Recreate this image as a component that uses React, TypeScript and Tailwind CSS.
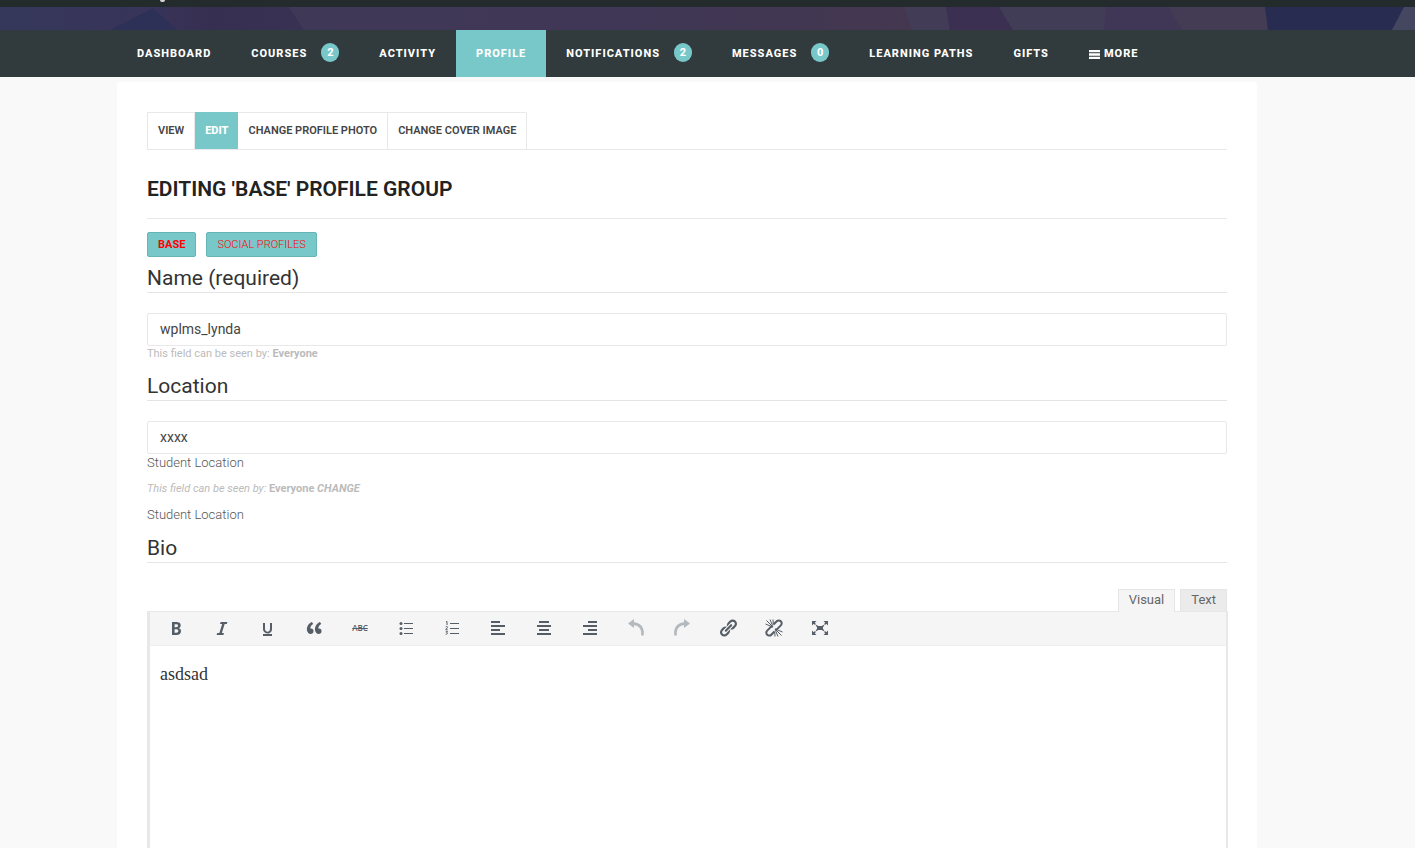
import React, { useState } from "react";

type NavItem = { label: string; count?: number; active?: boolean; menu?: boolean };

const navItems: NavItem[] = [
  { label: "Dashboard" },
  { label: "Courses", count: 2 },
  { label: "Activity" },
  { label: "Profile", active: true },
  { label: "Notifications", count: 2 },
  { label: "Messages", count: 0 },
  { label: "Learning Paths" },
  { label: "Gifts" },
  { label: "More", menu: true },
];

const profileTabs = [
  { label: "View" },
  { label: "Edit", active: true },
  { label: "Change Profile Photo" },
  { label: "Change Cover Image" },
];

function CoverStrip() {
  return (
    <svg className="block h-[23px] w-full" viewBox="0 0 1415 23" preserveAspectRatio="none" aria-hidden="true">
      <defs>
        <linearGradient id="cover" x1="0" x2="1" y1="0" y2="0">
          <stop offset="0" stopColor="#35385a" />
          <stop offset="0.1" stopColor="#38345a" />
          <stop offset="0.15" stopColor="#372f52" />
          <stop offset="0.2" stopColor="#393153" />
          <stop offset="1" stopColor="#3f3753" />
        </linearGradient>
        <linearGradient id="wine" x1="0" x2="1" y1="0" y2="0">
          <stop offset="0" stopColor="#3f3856" />
          <stop offset="0.55" stopColor="#3f3755" />
          <stop offset="1" stopColor="#443750" />
        </linearGradient>
      </defs>
      <rect width="1415" height="23" fill="url(#cover)" />
      <path d="M153 1L177 23H110z" fill="#2d3157" />
      <path d="M289 0H905L916 23H304z" fill="url(#wine)" />
      <path d="M904 0H946L950 23H912z" fill="#433c57" />
      <path d="M946 0H999L1013 23H950z" fill="#3b3052" />
      <path d="M999 0H1107L1104 23H1013z" fill="#423d57" />
      <path d="M1107 0H1168L1182 23H1104z" fill="#403656" />
      <path d="M1168 0H1265L1268 23H1182z" fill="#443c55" />
      <path d="M1265 0H1404L1392 23H1268z" fill="#292c51" />
      <path d="M1404 0H1415V23H1392z" fill="#454660" />
    </svg>
  );
}

function Icon({ children }: { children: React.ReactNode }) {
  return (
    <svg className="size-5" viewBox="0 0 20 20" fill="currentColor" aria-hidden="true">
      {children}
    </svg>
  );
}

const tools: { name: string; muted?: boolean; icon: React.ReactNode }[] = [
  {
    name: "Bold",
    icon: (
      <Icon>
        <path d="M6 4v13h4.54c1.37 0 2.46-.33 3.26-1 .8-.66 1.2-1.58 1.2-2.77 0-.84-.17-1.51-.51-2.01s-.9-.85-1.67-1.03v-.09c.57-.1 1.02-.4 1.36-.9s.51-1.13.51-1.91c0-1.14-.39-1.98-1.17-2.5C12.75 4.26 11.5 4 9.78 4H6zm2.57 5.15V6.26h1.36c.73 0 1.27.11 1.61.32.34.22.51.58.51 1.07 0 .54-.16.92-.47 1.15s-.82.35-1.51.35h-1.5zm0 2.19h1.6c1.44 0 2.16.53 2.16 1.61 0 .6-.17 1.05-.51 1.34s-.86.43-1.57.43H8.57v-3.38z" />
      </Icon>
    ),
  },
  {
    name: "Italic",
    icon: (
      <Icon>
        <path d="M14.78 6h-2.13l-2.8 9h2.12l-.62 2H4.6l.62-2h2.14l2.8-9H8.03l.62-2h6.75z" />
      </Icon>
    ),
  },
  {
    name: "Underline",
    icon: (
      <Icon>
        <path d="M14 5h-2v5.71c0 1.99-1.12 2.98-2.45 2.98-1.32 0-2.55-1-2.55-2.96V5H5v5.87c0 1.91 1 4.54 4.48 4.54 3.49 0 4.52-2.58 4.52-4.5V5zm0 13v-2H5v2h9z" />
      </Icon>
    ),
  },
  {
    name: "Blockquote",
    icon: (
      <Icon>
        <path d="M9.49 13.22c0-.74-.2-1.38-.61-1.9-.62-.78-1.83-.88-2.53-.72-.29-1.65 1.11-3.75 2.92-4.65L7.88 4c-2.73 1.3-5.42 4.28-4.96 8.05C3.21 14.43 4.59 16 6.54 16c.85 0 1.56-.25 2.12-.75s.83-1.18.83-2.03zm8.05 0c0-.74-.2-1.38-.61-1.9-.63-.78-1.83-.88-2.53-.72-.29-1.65 1.11-3.75 2.92-4.65L15.93 4c-2.73 1.3-5.41 4.28-4.95 8.05.29 2.38 1.66 3.95 3.61 3.95.85 0 1.56-.25 2.12-.75s.83-1.18.83-2.03z" />
      </Icon>
    ),
  },
  {
    name: "Strikethrough",
    icon: <span className="font-['Open_Sans',sans-serif] text-[8px] leading-5 font-semibold line-through">ABC</span>,
  },
  {
    name: "Bulleted list",
    icon: (
      <Icon>
        <circle cx="5" cy="5.5" r="1.5" />
        <circle cx="5" cy="10.5" r="1.5" />
        <circle cx="5" cy="15.5" r="1.5" />
        <path d="M8 5h9v1H8zM8 10h9v1H8zM8 15h9v1H8z" />
      </Icon>
    ),
  },
  {
    name: "Numbered list",
    icon: (
      <Icon>
        <path d="M8 5h9v1H8zM8 10h9v1H8zM8 15h9v1H8z" />
        <path
          d="M4 4l1-.6V7M3.7 8.9c.6-.7 2-.5 1.8.5-.1.6-1.2 1.2-1.8 1.9h2M3.7 13.2h1.8l-1 1.2c1.6 0 1.4 2.1-.9 1.7"
          fill="none"
          stroke="currentColor"
          strokeWidth="1"
        />
      </Icon>
    ),
  },
  {
    name: "Align left",
    icon: (
      <Icon>
        <path d="M3 3h9v2H3zM3 7h14v2H3zM3 11h9v2H3zM3 15h14v2H3z" />
      </Icon>
    ),
  },
  {
    name: "Align center",
    icon: (
      <Icon>
        <path d="M5 3h10v2H5zM3 7h14v2H3zM5 11h10v2H5zM3 15h14v2H3z" />
      </Icon>
    ),
  },
  {
    name: "Align right",
    icon: (
      <Icon>
        <path d="M8 3h9v2H8zM3 7h14v2H3zM8 11h9v2H8zM3 15h14v2H3z" />
      </Icon>
    ),
  },
  {
    name: "Undo",
    muted: true,
    icon: (
      <Icon>
        <path d="M2 5.500l6-4.500v3.300c5.500.3 11 4.200 9.700 13.200h-2.600c.9-6.500-2.400-10-7.100-10.300V10z" />
      </Icon>
    ),
  },
  {
    name: "Redo",
    muted: true,
    icon: (
      <Icon>
        <path d="M18 5.500l-6-4.500v3.300C6.500 4.600 1 8.500 2.300 17.500h2.600c-.9-6.500 2.400-10 7.100-10.300V10z" />
      </Icon>
    ),
  },
  {
    name: "Insert link",
    icon: (
      <Icon>
        <path d="M17.74 2.76c1.68 1.69 1.68 4.41 0 6.1l-1.53 1.52c-1.12 1.12-2.7 1.47-4.14 1.09l2.62-2.61.76-.77.76-.76c.84-.84.84-2.2 0-3.04-.84-.85-2.2-.85-3.04 0l-.77.76-3.38 3.38c-.37-1.44-.02-3.02 1.1-4.14l1.52-1.53c1.69-1.68 4.42-1.68 6.1 0zM8.59 13.43l5.34-5.34c.42-.42.42-1.1 0-1.52-.44-.43-1.13-.39-1.53 0l-5.33 5.34c-.42.42-.42 1.1 0 1.52.44.43 1.13.39 1.52 0zm-.76 2.29l4.14-4.15c.38 1.44.03 3.02-1.09 4.14l-1.52 1.53c-1.69 1.68-4.41 1.68-6.1 0-1.68-1.68-1.68-4.42 0-6.1l1.53-1.52c1.12-1.12 2.7-1.47 4.14-1.1l-4.14 4.15c-.85.84-.85 2.2 0 3.05.84.84 2.2.84 3.04 0z" />
      </Icon>
    ),
  },
  {
    name: "Remove link",
    icon: (
      <Icon>
        <g fill="none" stroke="currentColor">
          <path
            d="M9.500 6.500l3.200-3.200c1.200-1.200 3-1.200 4.100-.1 1.200 1.200 1.200 3 0 4.200l-3.200 3.200c-.8.8-1.800 1-2.700.7M10.500 13.500l-3.200 3.200c-1.200 1.200-3 1.200-4.100.1-1.200-1.200-1.200-3 0-4.200l3.200-3.200c.8-.8 1.800-1 2.700-.7"
            strokeWidth="2"
          />
          <path
            d="M2.500 2.500L9 9M6 1.500l2.500 6M1.500 6l6 2.500M9 1.500l.3 5M17.500 17.500L11 11M14 18.500l-2.500-6M18.500 14l-6-2.500M11 18.500l-.3-5"
            strokeWidth="1"
          />
        </g>
      </Icon>
    ),
  },
  {
    name: "Fullscreen",
    icon: (
      <Icon>
        <path d="M7 8h6v4H7zM2 3h4.500L2 7.500zM18 3v4.500L13.500 3zM2 17v-4.500L6.500 17zM18 17h-4.500l4.500-4.500z" />
        <path
          d="M3 4l4.500 4.500M17 4l-4.500 4.500M3 16l4.500-4.500M17 16l-4.500-4.500"
          stroke="currentColor"
          strokeWidth="1.400"
          strokeDasharray="3.500 1"
        />
      </Icon>
    ),
  },
];

function FieldLabel({ htmlFor, children }: { htmlFor: string; children: React.ReactNode }) {
  return (
    <label htmlFor={htmlFor} className="block border-b border-[#e5e5e5] pt-0.5 text-[21px] leading-[27px] text-[#333]">
      {children}
    </label>
  );
}

function TextField({ id, initial }: { id: string; initial: string }) {
  const [value, setValue] = useState(initial);
  return (
    <input
      id={id}
      type="text"
      value={value}
      onChange={(e) => setValue(e.target.value)}
      className="mt-5 block h-[33px] w-full rounded-xs border border-[#e8e8e8] bg-white px-3 pb-0.5 text-sm text-[#444] outline-none"
    />
  );
}

export default function App() {
  const [bio, setBio] = useState("asdsad");

  return (
    <div className="flex min-h-screen flex-col bg-[#f9f9f9] font-[Roboto,sans-serif]">
      <div className="h-[7px] shrink-0 bg-[#232b2d]">
        <div className="ml-[160px] h-0.5 w-[5px] rounded-b-full bg-[#d5d5d5]" />
      </div>
      <CoverStrip />
      <nav className="bg-[#313b3d] pr-[41px]">
        <ul className="mx-auto flex max-w-[1140px]">
          {navItems.map((item) => (
            <li key={item.label}>
              <a
                href="#"
                className={
                  item.active
                    ? "flex h-[47px] items-center bg-[#78c8c9] px-5 pt-0.5 text-[11px] font-extrabold tracking-[1px] text-white uppercase"
                    : "flex h-[47px] items-center px-5 pt-0.5 text-[11px] font-extrabold tracking-[1px] text-white uppercase"
                }
              >
                {item.menu && (
                  <svg className="mr-1 h-[9px] w-[11px]" viewBox="0 0 11 9" fill="currentColor" aria-hidden="true">
                    <path d="M0 0h11v2.300H0zM0 3.300h11v2.400H0zM0 6.700h11V9H0z" />
                  </svg>
                )}
                {item.label}
                {item.count !== undefined && (
                  <span className="mb-1 ml-[14px] flex h-[19px] w-[18px] items-center justify-center rounded-full bg-[#78c8c9] pt-px tracking-normal">
                    {item.count}
                  </span>
                )}
              </a>
            </li>
          ))}
        </ul>
      </nav>

      <div className="flex grow flex-col pt-[5px] pr-[41px]">
        <main className="mx-auto flex w-full max-w-[1140px] grow flex-col rounded-t-xs bg-white px-[30px] pt-[30px]">
          <div className="flex border-b border-[#e8e8e8]">
            <ul className="flex h-[37px] rounded-t-xs border-t border-l border-[#e8e8e8]">
              {profileTabs.map((tab) => (
                <li key={tab.label}>
                  <a
                    href="#"
                    className={
                      tab.active
                        ? "-mt-px flex h-[37px] items-center bg-[#78c8c9] px-[10px] pt-px text-[11px] font-extrabold text-white uppercase"
                        : "flex h-9 items-center border-r border-[#e8e8e8] px-[10px] text-[11px] font-semibold text-[#444] uppercase"
                    }
                  >
                    {tab.label}
                  </a>
                </li>
              ))}
            </ul>
          </div>

          <h1 className="border-b border-[#e8e8e8] pt-6 pb-[14px] text-[21px] leading-[30px] font-semibold text-[#222] uppercase">
            Editing 'Base' Profile Group
          </h1>

          <div className="mt-[13px] flex gap-[10px]">
            <a
              href="#"
              className="flex h-[25px] items-center rounded-xs border border-[#66b5b6] bg-[#78c8c9] px-[10px] pt-px text-[11px] font-bold text-[#f00] uppercase"
            >
              Base
            </a>
            <a
              href="#"
              className="flex h-[25px] items-center rounded-xs border border-[#66b5b6] bg-[#78c8c9] px-[10px] pt-px text-[11px] font-light text-[#f00] uppercase"
            >
              Social Profiles
            </a>
          </div>

          <form className="flex grow flex-col" onSubmit={(e) => e.preventDefault()}>
            <div className="mt-[6px]">
              <FieldLabel htmlFor="name">Name (required)</FieldLabel>
              <TextField id="name" initial="wplms_lynda" />
              <p className="text-[11px] leading-4 text-[#bbb]">
                This field can be seen by: <span className="font-bold">Everyone</span>
              </p>
            </div>

            <div className="mt-[9px]">
              <FieldLabel htmlFor="location">Location</FieldLabel>
              <TextField id="location" initial="xxxx" />
              <p className="text-[13px] leading-[18px] font-light text-[#555]">Student Location</p>
              <p className="mt-2 text-[11px] leading-[18px] text-[#bbb] italic">
                This field can be seen by: <span className="font-bold not-italic">Everyone</span>{" "}
                <a href="#" className="font-bold uppercase">
                  Change
                </a>
              </p>
              <p className="mt-2 text-[13px] leading-[18px] font-light text-[#555]">Student Location</p>
            </div>

            <div className="mt-[9px] flex grow flex-col">
              <FieldLabel htmlFor="bio">Bio</FieldLabel>
              <div className="mt-[26px] flex justify-end gap-[5px] text-[13px] text-[#666]">
                <button
                  type="button"
                  className="relative z-10 -mb-px h-[23px] border border-b-0 border-[#e5e5e5] bg-[#f5f5f5] px-[10px] pb-0.5"
                >
                  Visual
                </button>
                <button
                  type="button"
                  className="h-[22px] border border-b-0 border-[#e5e5e5] bg-[#ebebeb] px-[10px] pb-0.5"
                >
                  Text
                </button>
              </div>
              <div className="-mr-px flex grow flex-col border-t border-r-2 border-l-3 border-[#e8e8e8]">
                <div role="toolbar" className="flex h-[34px] items-center border-b border-[#eee] bg-[#f5f5f5] pl-[3px]">
                  {tools.map((tool) => (
                    <button
                      key={tool.name}
                      type="button"
                      aria-label={tool.name}
                      className={
                        tool.muted
                          ? "flex h-full w-[46px] items-center justify-center pb-0.5 text-[#b4b9be]"
                          : "flex h-full w-[46px] items-center justify-center pb-0.5 text-[#555d66]"
                      }
                    >
                      {tool.icon}
                    </button>
                  ))}
                </div>
                <textarea
                  id="bio"
                  value={bio}
                  onChange={(e) => setBio(e.target.value)}
                  className="block w-full grow resize-none bg-white px-[10px] py-4 font-['Liberation_Serif',serif] text-lg leading-6 text-[#333] outline-none"
                />
              </div>
            </div>
          </form>
        </main>
      </div>
    </div>
  );
}
